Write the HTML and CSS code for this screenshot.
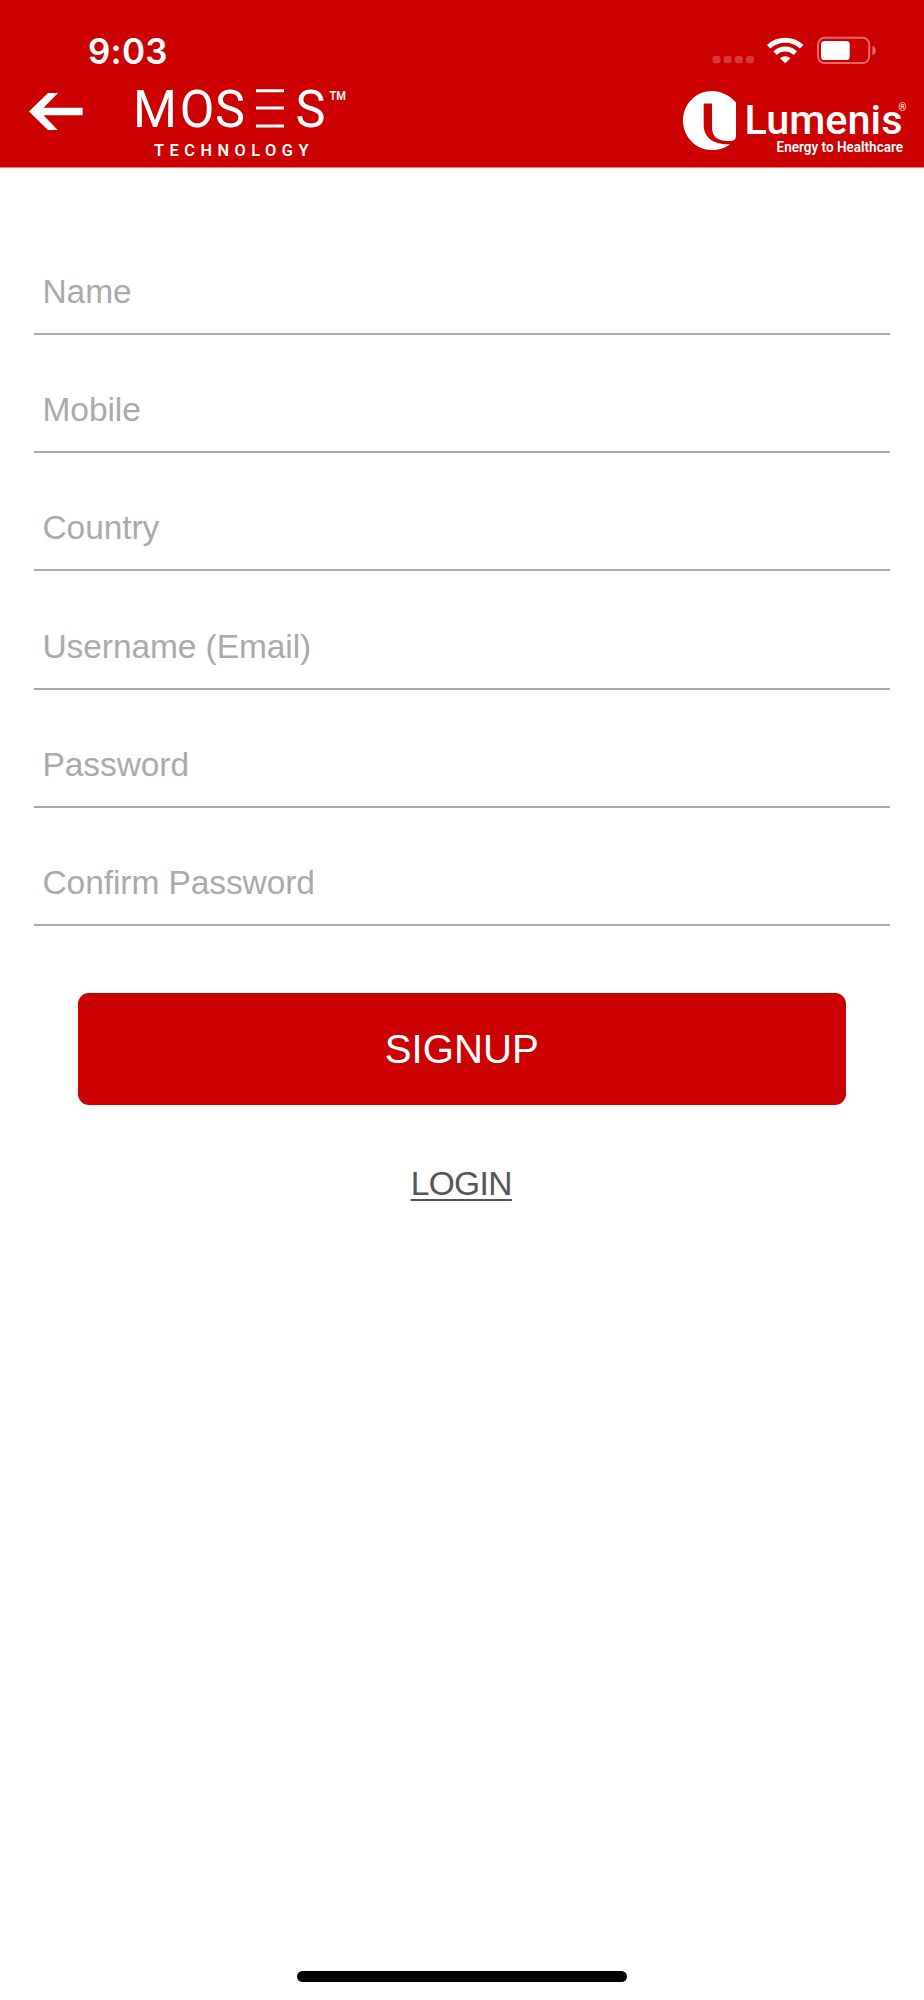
FILE: index.html
```html
<!DOCTYPE html>
<html lang="en">
<head>
<meta charset="utf-8">
<title>Sign up</title>
<link rel="stylesheet" href="styles.css">
</head>
<body>
<div class="screen">
  <header class="header">
    <div class="status-bar">
      <span class="clock">9:03</span>
      <svg class="status-icons" width="166" height="30" viewBox="710 35 166 30">
        <g fill="#fff" opacity=".22">
          <rect x="712.5" y="56" width="8" height="7.2" rx="2.3"/>
          <rect x="723.7" y="56" width="8" height="7.2" rx="2.3"/>
          <rect x="734.8" y="56" width="8" height="7.2" rx="2.3"/>
          <rect x="746" y="56" width="8" height="7.2" rx="2.3"/>
        </g>
        <g fill="none" stroke="#fff" stroke-width="5">
          <path d="M768.7 46.8a23.8 23.8 0 0 1 33 0"/>
          <path d="M775.1 53.2a14.5 14.5 0 0 1 20.2 0"/>
        </g>
        <path d="M779.9 58.3a7.7 7.7 0 0 1 10.6 0L785.2 63.3z" fill="#fff"/>
        <rect x="818" y="37.8" width="51.2" height="25.2" rx="6.5" fill="none" stroke="#fff" stroke-width="2" opacity=".42"/>
        <rect x="821" y="41" width="28.7" height="19" rx="3.6" fill="#fff"/>
        <path d="M872.5 45.8q3.2 1.2 3.2 4.6t-3.2 4.7z" fill="#fff" opacity=".45"/>
      </svg>
    </div>
    <div class="nav">
      <svg class="back" width="54" height="37" viewBox="0 0 54 37">
        <path d="M19 0H29L14.5 14.7H53.7V22.2H14.5L28.7 37H19L0 18.5z" fill="#fff"/>
      </svg>
      <svg class="moses" width="217" height="77" viewBox="130 82 217 77">
        <g class="logo-text">
          <text class="moses-name" transform="translate(132.900 127.300) scale(.96 1)" x="0 48.800 85.500 169.500" y="0">MOSS</text>
          <path d="M256 89.3h28v3h-28zm0 17.3h28v3h-28zm0 17.8h28v3h-28z"/>
          <text class="moses-tm" x="329.5" y="99.6" textLength="16.5" lengthAdjust="spacingAndGlyphs">TM</text>
          <text class="moses-sub" x="154" y="155.8" textLength="154.500">TECHNOLOGY</text>
        </g>
      </svg>
      <svg class="lumenis" width="224" height="67" viewBox="683 90 224 67">
        <path d="M736 102.500C730 95.500 721 91 711.800 91C695.900 91 683 104.200 683 120.500S695.900 150 711.800 150C718.500 150 725.500 147.800 730 144.200C715 145 703.700 138.500 703.700 125V103.500H712V127C712 137.500 718 141 728 141H731Q736 140.500 736 135.500z" fill="#fff"/>
        <g class="logo-text">
          <text class="lum-name" x="744.500" y="134.300" textLength="158" lengthAdjust="spacingAndGlyphs">Lumenis</text>
          <text class="lum-reg" x="898.500" y="110.500">®</text>
          <text class="lum-sub" x="776.500" y="152.200" textLength="126.500" lengthAdjust="spacingAndGlyphs">Energy to Healthcare</text>
        </g>
      </svg>
    </div>
  </header>
  <main class="form">
    <div class="field">Name</div>
    <div class="field">Mobile</div>
    <div class="field">Country</div>
    <div class="field">Username (Email)</div>
    <div class="field">Password</div>
    <div class="field">Confirm Password</div>
    <div class="signup">SIGNUP</div>
    <div class="login">LOGIN</div>
  </main>
  <div class="home-indicator"></div>
</div>
</body>
</html>
```
FILE: styles.css
```css
body {
  margin: 0;
  background: #fff;
  font-family: "Liberation Sans", Arial, sans-serif;
}
.screen {
  width: 924px;
  height: 2000px;
  display: flex;
  flex-direction: column;
  overflow: hidden;
}
.header {
  height: 167px;
  flex: none;
  background: #c00;
  border-bottom: 1px solid #e58080;
}
.status-bar {
  height: 65px;
  padding: 0 48px 0 88px;
  display: flex;
  justify-content: space-between;
  align-items: flex-end;
}
.clock {
  color: #fff;
  font: 600 35px/27px Inter, sans-serif;
  letter-spacing: .2px;
}
.nav {
  height: 102px;
  padding: 0 17px 0 29px;
  display: flex;
  align-items: flex-start;
}
.back { margin-top: 28px; }
.moses { margin: 17px 0 0 47px; }
.lumenis { margin: 25px 0 0 auto; }
.logo-text {
  fill: #fff;
  font-family: Roboto, sans-serif;
}
.moses-name { font-size: 52.5px; }
.moses-tm { font-size: 12px; font-weight: 600; }
.moses-sub { font-size: 16.4px; font-weight: 600; }
.lum-name { font-size: 41px; font-weight: 500; }
.lum-reg { font-size: 10px; }
.lum-sub { font-size: 13.9px; font-weight: 600; }
.form {
  flex: 1;
  padding: 48.5px 34px 0 33.5px;
}
.field {
  box-sizing: border-box;
  height: 118.3px;
  padding: 56.2px 0 0 9px;
  border-bottom: 2px solid #aaa;
  color: #aaa;
  font-size: 33.5px;
  letter-spacing: -.08px;
  line-height: 38px;
}
.signup {
  height: 112px;
  margin: 66.8px 44.5px 0;
  border-radius: 11px;
  background: #c00;
  color: #fff;
  font-size: 40.2px;
  line-height: 113px;
  text-align: center;
}
.login {
  margin-top: 60px;
  padding-right: 1px;
  color: #555;
  font-size: 33.5px;
  letter-spacing: -.6px;
  line-height: 38px;
  text-align: center;
  text-decoration: underline;
  text-decoration-thickness: 2px;
  text-underline-offset: 4px;
  text-decoration-skip-ink: none;
}
.home-indicator {
  width: 330px;
  height: 11px;
  margin: 0 auto 18px;
  border-radius: 6px;
  background: #000;
}
```
